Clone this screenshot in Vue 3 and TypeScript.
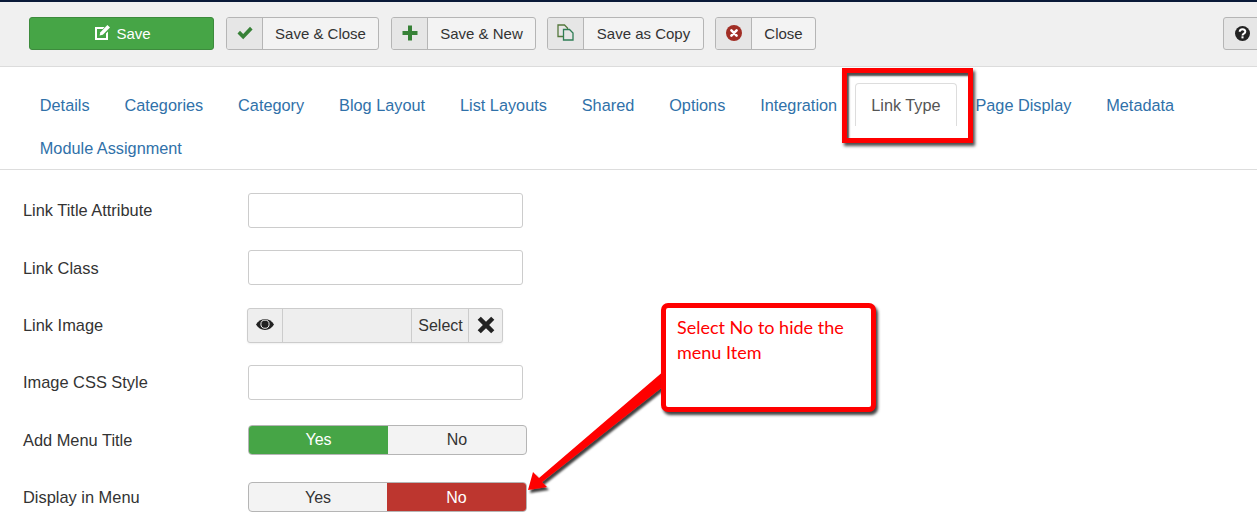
<script setup lang="ts">
interface Row { label: string; kind: 'input' | 'media' | 'switch'; on?: 'yes' | 'no' }
const tabsA: string[] = ['Details', 'Categories', 'Category', 'Blog Layout', 'List Layouts', 'Shared', 'Options', 'Integration', 'Link Type', 'Page Display', 'Metadata']
const rows: Row[] = [
  { label: 'Link Title Attribute', kind: 'input' },
  { label: 'Link Class', kind: 'input' },
  { label: 'Link Image', kind: 'media' },
  { label: 'Image CSS Style', kind: 'input' },
  { label: 'Add Menu Title', kind: 'switch', on: 'yes' },
  { label: 'Display in Menu', kind: 'switch', on: 'no' },
]
</script>

<template>
  <div class="page">
    <header class="toolbar">
      <button class="save">
        <svg class="save-ico" viewBox="0 0 15 15" width="15" height="15">
          <path fill="#fff" d="M0 2h9.6L7.8 4H2v9h9V8.4l2-2V15H0z" />
          <path fill="#fff" d="M12.4 0L15 2.6 7.8 9.8 4.6 10.6l.8-3.4z" />
        </svg>
        <span>Save</span>
      </button>
      <div class="btn w-close">
        <span class="ico"><svg viewBox="0 0 16 14" width="16" height="14"><path fill="#378137" d="M.5 7.4L3 4.8l3.2 3.1L13 .8l2.6 2.6-9.4 9.8z" /></svg></span>
        <span class="txt">Save &amp; Close</span>
      </div>
      <div class="btn w-new">
        <span class="ico"><svg viewBox="0 0 16 16" width="16" height="16"><path fill="#378137" d="M6 .5h4V6h5.5v4H10v5.5H6V10H.5V6H6z" /></svg></span>
        <span class="txt">Save &amp; New</span>
      </div>
      <div class="btn w-copy">
        <span class="ico"><svg class="copy" viewBox="0 0 17 17" width="17" height="17"><path fill="none" stroke="#55783c" stroke-width="1.3" d="M1 1h6.5L10.5 4v8.5H1z" /><path fill="#e6e6e6" stroke="#2f7d55" stroke-width="1.3" d="M6.5 5.5h6L16 9v7H6.5z" /></svg></span>
        <span class="txt">Save as Copy</span>
      </div>
      <div class="btn w-x">
        <span class="ico"><svg viewBox="0 0 16 16" width="16" height="16"><circle cx="8" cy="8" r="8" fill="#a12e25" /><path stroke="#fff" stroke-width="2.6" stroke-linecap="round" d="M5.4 5.4l5.2 5.2M10.6 5.4l-5.2 5.2" /></svg></span>
        <span class="txt">Close</span>
      </div>
      <div class="help"><svg viewBox="0 0 16 16" width="15" height="15"><circle cx="8" cy="8" r="8" fill="#222" /><path fill="none" stroke="#fff" stroke-width="2.1" d="M5 6.2c0-3.6 6-3.6 6 0 0 2-3 2-3 3.8" /><rect x="6.9" y="11" width="2.2" height="2.2" fill="#fff" /></svg></div>
    </header>

    <nav class="tabs">
      <a v-for="t in tabsA" :key="t" class="tab" :class="{ active: t === 'Link Type' }">{{ t }}</a>
      <a class="tab second">Module Assignment</a>
    </nav>

    <section class="form">
      <div v-for="r in rows" :key="r.label" class="row">
        <label class="lbl">{{ r.label }}</label>
        <div v-if="r.kind === 'input'" class="input"></div>
        <div v-else-if="r.kind === 'media'" class="media">
          <span class="m-eye"><svg viewBox="0 0 18 11" width="18" height="11"><path fill="#222" d="M9 0C5 0 2 2.400 0 5.500 2 8.600 5 11 9 11s7-2.400 9-5.500C16 2.400 13 0 9 0z" /><circle cx="9" cy="5.200" r="4.100" fill="none" stroke="#eee" stroke-width="1" /><circle cx="9" cy="5.200" r="2.500" fill="#222" /></svg></span>
          <span class="m-fill"></span>
          <span class="m-sel">Select</span>
          <span class="m-x"><svg viewBox="0 0 16 16" width="18" height="18"><path fill="#222" d="M3.400.6L8 5.200 12.600.6l2.800 2.800L10.800 8l4.600 4.600-2.800 2.800L8 10.800l-4.600 4.600-2.800-2.800L5.200 8 .6 3.400z" /></svg></span>
        </div>
        <div v-else class="switch" :class="r.on === 'yes' ? 'sw-yes' : 'sw-no'">
          <span class="opt y">Yes</span>
          <span class="opt n">No</span>
        </div>
      </div>
    </section>

    <div class="mark"></div>
    <svg class="arrow" width="150" height="135" viewBox="0 0 150 135">
      <defs>
        <filter id="sh" x="-20%" y="-20%" width="140%" height="140%">
          <feDropShadow dx="2" dy="3" stdDeviation="1.200" flood-color="#000" flood-opacity=".75" />
        </filter>
      </defs>
      <path filter="url(#sh)" fill="#f00" d="M8 125 L13 107 L19 113 L145 5 L145 20 L22 117 L27 122 Z" />
    </svg>
    <div class="callout">Select No to hide the menu Item</div>
  </div>
</template>

<style>
html, body { margin: 0; background: #fff; overflow: hidden; }
</style>

<style scoped>
.page { position: relative; width: 1257px; height: 524px; overflow: hidden; background: #fff; font-family: "Liberation Sans", Arial, sans-serif; font-size: 16px; color: #333; }
.toolbar { box-sizing: border-box; height: 67px; background: #f0f0f0; border-top: 2px solid #0a1a38; border-bottom: 1px solid #dcdcdc; padding: 15px 0 0 29px; display: flex; align-items: flex-start; }
.save { box-sizing: border-box; width: 185px; height: 33px; margin: 0 12px 0 0; padding: 0 0 0 3px; display: flex; align-items: center; justify-content: center; gap: 6px; background: #46a546; border: 1px solid #3d8b3d; border-radius: 3px; color: #fff; font: 15px "Liberation Sans", Arial, sans-serif; }
.save-ico { margin-top: -2px; }
.btn { box-sizing: border-box; height: 33px; display: flex; border: 1px solid #b5b5b5; border-radius: 3px; background: #f3f3f3; font-size: 15px; color: #333; }
.ico { box-sizing: border-box; width: 36px; display: flex; align-items: center; justify-content: center; background: #e6e6e6; border-right: 1px solid #b5b5b5; border-radius: 2px 0 0 2px; }
.ico svg { margin-top: -2px; }
.txt { flex: 1; display: flex; align-items: center; justify-content: center; }
.w-close { width: 153px; margin-right: 12px; }
.w-new { width: 145px; margin-right: 11px; }
.w-copy { width: 157px; margin-right: 11px; }
.w-x { width: 101px; }
.help { box-sizing: border-box; width: 50px; height: 33px; margin-left: auto; margin-right: -16px; display: flex; align-items: center; padding-left: 11px; background: #e6e6e6; border: 1px solid #b5b5b5; border-radius: 3px; }
.tabs { box-sizing: border-box; height: 103px; margin: 0; padding: 16px 0 0 23px; display: flex; flex-wrap: wrap; align-content: flex-start; border-bottom: 1px solid #ddd; }
.tab { box-sizing: border-box; height: 43px; padding: 1px 18.1px 0 16.8px; line-height: 43px; color: #3071a9; font-size: 16.3px; white-space: nowrap; }
.tab.active { color: #555; border: 1px solid #ddd; border-bottom: 0; border-radius: 4px 4px 0 0; line-height: 41px; padding: 1px 15px 0; margin: 0 2px 0 0; background: #fff; }
.tab.second { flex-basis: 100%; }
.form { padding: 23px 0 0 23px; }
.row { height: 35px; margin-bottom: 22.35px; display: flex; align-items: center; }
.lbl { width: 225px; padding-top: 0.6px; font-size: 16.4px; color: #333; }
.input { box-sizing: border-box; width: 275px; height: 35px; background: #fff; border: 1px solid #ccc; border-radius: 3px; }
.media { box-sizing: border-box; width: 256px; height: 35px; margin-left: -1px; display: flex; background: #eee; border: 1px solid #ccc; border-radius: 3px; box-shadow: 0 1px 2px rgba(0,0,0,.06); }
.media > span { display: flex; align-items: center; justify-content: center; }
.m-eye { box-sizing: border-box; width: 35px; border-right: 1px solid #ccc; }
.m-eye svg { margin-top: -2px; }
.m-fill { flex: 1; border-right: 1px solid #ccc; }
.media > .m-sel { box-sizing: border-box; width: 57px; padding: 1px 0 0 1px; border-right: 1px solid #ccc; }
.m-x { width: 33px; }
.switch { box-sizing: border-box; width: 279px; height: 30px; display: flex; border: 1px solid #b5b5b5; border-radius: 4px; background: #f3f3f3; overflow: hidden; font-size: 16px; }
.opt { display: flex; align-items: center; justify-content: center; padding-top: 1px; }
.sw-yes .y { width: 139px; background: #46a546; color: #fff; margin: -1px 0 -1px -1px; padding: 2px 0 1px 1px; }
.sw-yes .n { flex: 1; }
.sw-no .y { width: 138px; }
.sw-no .n { flex: 1; background: #bd362f; color: #fff; margin: -1px -1px -1px 0; padding: 2px 1px 1px 0; }
.mark { position: absolute; left: 842px; top: 68px; box-sizing: border-box; width: 131px; height: 75px; border: 5px solid #f00; box-shadow: 2px 3px 3px rgba(0,0,0,.7), inset 2px 3px 2px rgba(0,0,0,.7); }
.callout { position: absolute; left: 661px; top: 303px; box-sizing: border-box; width: 215px; height: 109px; padding: 7px 10px 0 11px; background: #fff; border: 5px solid #f00; border-radius: 7px; box-shadow: 2px 3px 3px rgba(0,0,0,.75); color: #f00; font: 18px/25px Lato, sans-serif; }
.arrow { position: absolute; left: 520px; top: 365px; }
</style>
